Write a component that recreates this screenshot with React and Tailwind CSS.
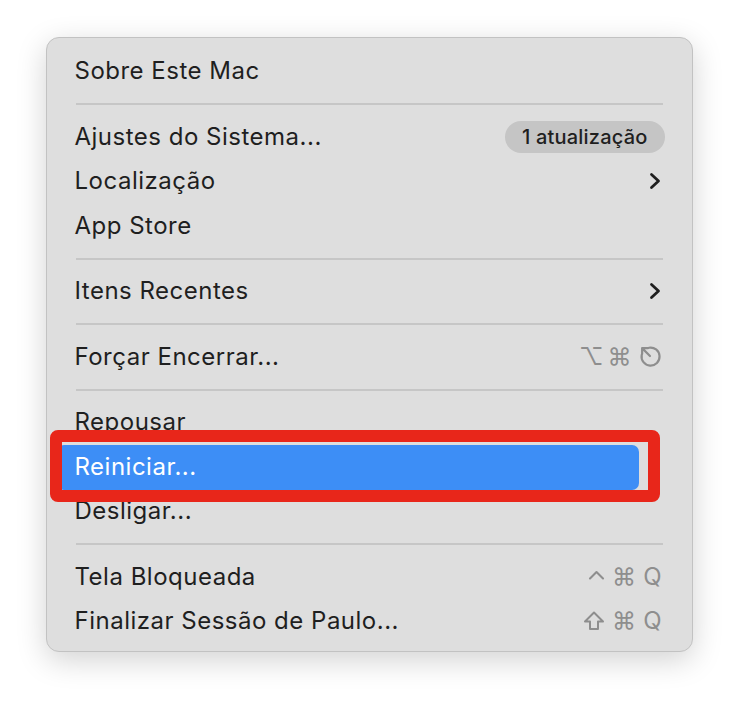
const font = { fontFamily: "Inter, 'Noto Sans', sans-serif" };

function Chevron() {
  return (
    <svg width="14" height="18" viewBox="0 0 14 18" className="text-[#1f1f1f]">
      <path d="M3.5 2.5 L10.5 9 L3.5 15.5" fill="none" stroke="currentColor" strokeWidth="2.8" strokeLinecap="round" strokeLinejoin="round" />
    </svg>
  );
}

// escape key glyph: broken circle with a north-west arrow
function Escape() {
  return (
    <svg width="23" height="23" viewBox="0 0 22 22">
      <path d="M9.5 2.6 A8.6 8.6 0 1 1 2.6 9.5" fill="none" stroke="currentColor" strokeWidth="2.1" strokeLinecap="round" />
      <path d="M10.5 10.5 L3 3 M3 3 L8.6 3 M3 3 L3 8.6" fill="none" stroke="currentColor" strokeWidth="2.1" strokeLinecap="round" strokeLinejoin="round" />
    </svg>
  );
}

function Ctrl() {
  return (
    <svg width="17" height="22" viewBox="0 0 17 22">
      <path d="M2 12.5 L8.5 6 L15 12.5" fill="none" stroke="currentColor" strokeWidth="2.1" strokeLinecap="round" strokeLinejoin="round" />
    </svg>
  );
}

function Shift() {
  return (
    <svg width="22" height="22" viewBox="0 0 22 22">
      <path d="M11 2.5 L20 11.5 L15 11.5 L15 19 L7 19 L7 11.5 L2 11.5 Z" fill="none" stroke="currentColor" strokeWidth="2" strokeLinejoin="round" />
    </svg>
  );
}

function Keys({ children }) {
  return <div className="flex items-center gap-[7px] text-[24px] leading-none text-[#8e8e8e]">{children}</div>;
}

function Row({ label, right, active }) {
  return (
    <div
      className={
        "relative flex h-[44.5px] items-center justify-between pr-[30px] text-[24px] " +
        (active ? "text-white" : "text-[#1f1f1f]")
      }
    >
      {active && <div className="absolute left-[10px] top-[0px] h-[45px] w-[582px] rounded-[7px] bg-[#3d8ef6]" />}
      <span className="relative pl-[28px] tracking-[0.5px]">{label}</span>
      <div className="relative">{right}</div>
    </div>
  );
}

function Sep() {
  return (
    <div className="flex h-[21px] items-center pl-[29px] pr-[29px]">
      <div className="h-[2px] w-full bg-[#c6c6c6]" />
    </div>
  );
}

export default function App() {
  return (
    <div className="flex h-[706px] w-[738px] justify-center bg-white pt-[37px]" style={font}>
      <div className="relative h-[615px] w-[647px] rounded-[13px] border border-[#c2c2c2] bg-[#dedede] pt-[11px] shadow-[0_8px_30px_rgba(0,0,0,0.18)]">
        <Row label="Sobre Este Mac" />
        <Sep />
        <Row
          label="Ajustes do Sistema..."
          right={
            <span className="-mr-[3px] flex h-[32px] items-center rounded-full bg-[#c5c5c5] px-[17px] text-[20px] font-medium tracking-[0.2px] text-[#1f1f1f]">
              1 atualização
            </span>
          }
        />
        <Row label="Localização" right={<Chevron />} />
        <Row label="App Store" />
        <Sep />
        <Row label="Itens Recentes" right={<Chevron />} />
        <Sep />
        <Row
          label="Forçar Encerrar..."
          right={
            <Keys>
              <span className="-mr-[3px] text-[24px]">⌥</span>
              <span>⌘</span>
              <Escape />
            </Keys>
          }
        />
        <Sep />
        <Row label="Repousar" />
        <Row label="Reiniciar..." active />
        <Row label="Desligar..." />
        <Sep />
        <Row
          label="Tela Bloqueada"
          right={
            <Keys>
              <Ctrl />
              <span>⌘</span>
              <span>Q</span>
            </Keys>
          }
        />
        <Row
          label="Finalizar Sessão de Paulo..."
          right={
            <Keys>
              <Shift />
              <span>⌘</span>
              <span>Q</span>
            </Keys>
          }
        />
        <div className="pointer-events-none absolute left-[3px] top-[392px] h-[72px] w-[610px] rounded-[8px] border-[12px] border-[#e8261a]" />
      </div>
    </div>
  );
}
